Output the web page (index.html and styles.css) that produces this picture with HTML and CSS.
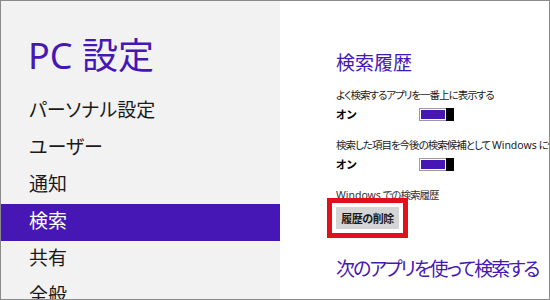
FILE: index.html
```html
<!DOCTYPE html>
<html lang="ja">
<head>
  <meta charset="utf-8">
  <title>PC 設定</title>
  <link rel="stylesheet" href="styles.css">
</head>
<body>
  <div class="frame">
    <div class="side">
      <h1 class="title">PC 設定</h1>
      <ul class="menu">
        <li>パーソナル設定</li>
        <li>ユーザー</li>
        <li>通知</li>
        <li class="selected">検索</li>
        <li>共有</li>
        <li>全般</li>
      </ul>
    </div>
    <div class="content">
      <h2 class="heading">検索履歴</h2>

      <div class="setting">
        <div class="label">よく検索するアプリを一番上に表示する</div>
        <div class="toggle-row">
          <span class="state">オン</span>
          <span class="toggle"><span class="fill"></span><span class="thumb"></span></span>
        </div>
      </div>

      <div class="setting">
        <div class="label">検索した項目を今後の検索候補として <span class="latin">Windows</span> に保存する</div>
        <div class="toggle-row">
          <span class="state">オン</span>
          <span class="toggle"><span class="fill"></span><span class="thumb"></span></span>
        </div>
      </div>

      <div class="setting history">
        <div class="label"><span class="latin">Windows</span> での検索履歴</div>
        <button class="delete-button">履歴の削除</button>
      </div>

      <h2 class="subheading">次のアプリを使って検索する</h2>
    </div>
  </div>
</body>
</html>
```

FILE: styles.css
```css
body {
  margin: 0;
  padding: 0;
  background-color: #fff;
  font-family: "Noto Sans", "Noto Sans CJK JP", sans-serif;
  font-feature-settings: "palt";
}

.frame {
  display: flex;
  width: 548px;
  height: 298px;
  border: 1px solid #8a8a8a;
  overflow: hidden;
}

.side {
  width: 279px;
  flex-shrink: 0;
  background-color: #f2f2f2;
}

.title {
  margin: 33px 0 0 27px;
  font-size: 36px;
  line-height: 44px;
  font-weight: normal;
  color: #4617b4;
}

.menu {
  list-style: none;
  margin: 15px 0 0 0;
  padding: 0;
}

.menu li {
  height: 37px;
  line-height: 35px;
  padding-left: 28px;
  font-size: 19px;
  color: #1a1a1a;
}

.menu li.selected {
  background-color: #4617b4;
  color: #fff;
}

.content {
  flex: 1;
  padding: 50px 0 0 56px;
  overflow: hidden;
  white-space: nowrap;
}

.heading {
  margin: 0;
  font-size: 19px;
  line-height: 24px;
  font-weight: normal;
  color: #4617b4;
}

.setting {
  margin-top: 13px;
}

.setting + .setting {
  margin-top: 17px;
}

.label {
  font-size: 10.5px;
  line-height: 14px;
  letter-spacing: -1px;
  color: #1a1a1a;
}

.label .latin {
  letter-spacing: 0;
}

.toggle-row {
  display: flex;
  align-items: center;
  margin-top: 5px;
  height: 14px;
}

.state {
  width: 83px;
  font-size: 11px;
  font-weight: bold;
  color: #000;
}

.toggle {
  display: flex;
  width: 35px;
  height: 13px;
  box-sizing: border-box;
  border: 1px solid #9a9a9a;
  background-color: #fff;
}

.fill {
  flex: 1;
  margin: 1px;
  background-color: #4617b4;
}

.thumb {
  width: 8px;
  margin: -1px -1px -1px 0;
  background-color: #000;
}

.history .label {
  color: #333;
}

.delete-button {
  display: block;
  margin-top: 5px;
  width: 63px;
  height: 22px;
  padding: 0;
  border: none;
  background-color: #d5d5d5;
  font-family: "Noto Sans CJK JP", sans-serif;
  font-size: 11px;
  font-weight: bold;
  letter-spacing: -0.5px;
  color: #1a1a1a;
  outline: 5px solid #e3101c;
  outline-offset: 4px;
}

.subheading {
  margin: 27px 0 0 0;
  font-size: 19px;
  line-height: 26px;
  letter-spacing: -2px;
  font-weight: normal;
  color: #4617b4;
}
```
